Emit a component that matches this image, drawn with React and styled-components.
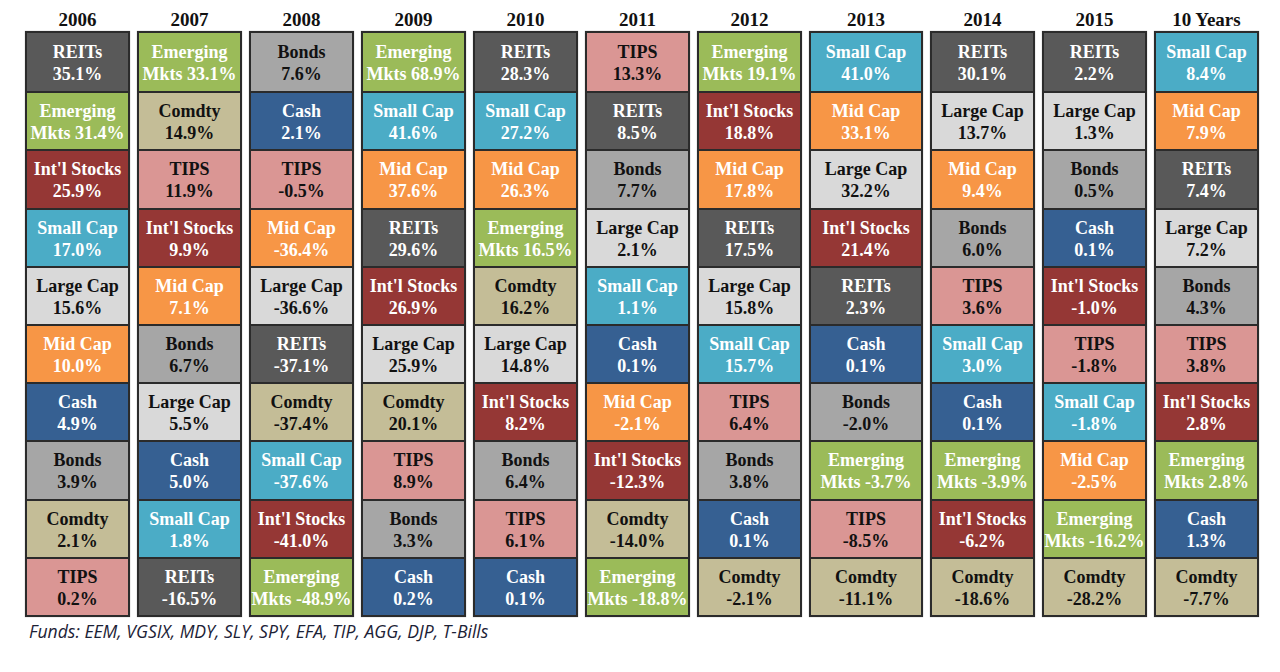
import React from "react";
import styled, { createGlobalStyle } from "styled-components";

const GlobalStyle = createGlobalStyle`
  html, body { margin: 0; padding: 0; background: #ffffff; }
  body { width: 1280px; height: 672px; overflow: hidden; }
`;

const ASSETS = {
  REITs: { bg: "#595959", fg: "#ffffff" },
  Emerging: { bg: "#9bbb59", fg: "#ffffff" },
  "Int'l Stocks": { bg: "#953735", fg: "#ffffff" },
  "Small Cap": { bg: "#4bacc6", fg: "#ffffff" },
  "Large Cap": { bg: "#d9d9d9", fg: "#111111" },
  "Mid Cap": { bg: "#f79646", fg: "#ffffff" },
  Cash: { bg: "#366092", fg: "#ffffff" },
  Bonds: { bg: "#a6a6a6", fg: "#111111" },
  Comdty: { bg: "#c4bd97", fg: "#111111" },
  TIPS: { bg: "#da9694", fg: "#111111" },
};

const DATA = [
  { year: "2006", rows: [["REITs", "35.1%"], ["Emerging", "31.4%"], ["Int'l Stocks", "25.9%"], ["Small Cap", "17.0%"], ["Large Cap", "15.6%"], ["Mid Cap", "10.0%"], ["Cash", "4.9%"], ["Bonds", "3.9%"], ["Comdty", "2.1%"], ["TIPS", "0.2%"]] },
  { year: "2007", rows: [["Emerging", "33.1%"], ["Comdty", "14.9%"], ["TIPS", "11.9%"], ["Int'l Stocks", "9.9%"], ["Mid Cap", "7.1%"], ["Bonds", "6.7%"], ["Large Cap", "5.5%"], ["Cash", "5.0%"], ["Small Cap", "1.8%"], ["REITs", "-16.5%"]] },
  { year: "2008", rows: [["Bonds", "7.6%"], ["Cash", "2.1%"], ["TIPS", "-0.5%"], ["Mid Cap", "-36.4%"], ["Large Cap", "-36.6%"], ["REITs", "-37.1%"], ["Comdty", "-37.4%"], ["Small Cap", "-37.6%"], ["Int'l Stocks", "-41.0%"], ["Emerging", "-48.9%"]] },
  { year: "2009", rows: [["Emerging", "68.9%"], ["Small Cap", "41.6%"], ["Mid Cap", "37.6%"], ["REITs", "29.6%"], ["Int'l Stocks", "26.9%"], ["Large Cap", "25.9%"], ["Comdty", "20.1%"], ["TIPS", "8.9%"], ["Bonds", "3.3%"], ["Cash", "0.2%"]] },
  { year: "2010", rows: [["REITs", "28.3%"], ["Small Cap", "27.2%"], ["Mid Cap", "26.3%"], ["Emerging", "16.5%"], ["Comdty", "16.2%"], ["Large Cap", "14.8%"], ["Int'l Stocks", "8.2%"], ["Bonds", "6.4%"], ["TIPS", "6.1%"], ["Cash", "0.1%"]] },
  { year: "2011", rows: [["TIPS", "13.3%"], ["REITs", "8.5%"], ["Bonds", "7.7%"], ["Large Cap", "2.1%"], ["Small Cap", "1.1%"], ["Cash", "0.1%"], ["Mid Cap", "-2.1%"], ["Int'l Stocks", "-12.3%"], ["Comdty", "-14.0%"], ["Emerging", "-18.8%"]] },
  { year: "2012", rows: [["Emerging", "19.1%"], ["Int'l Stocks", "18.8%"], ["Mid Cap", "17.8%"], ["REITs", "17.5%"], ["Large Cap", "15.8%"], ["Small Cap", "15.7%"], ["TIPS", "6.4%"], ["Bonds", "3.8%"], ["Cash", "0.1%"], ["Comdty", "-2.1%"]] },
  { year: "2013", rows: [["Small Cap", "41.0%"], ["Mid Cap", "33.1%"], ["Large Cap", "32.2%"], ["Int'l Stocks", "21.4%"], ["REITs", "2.3%"], ["Cash", "0.1%"], ["Bonds", "-2.0%"], ["Emerging", "-3.7%"], ["TIPS", "-8.5%"], ["Comdty", "-11.1%"]] },
  { year: "2014", rows: [["REITs", "30.1%"], ["Large Cap", "13.7%"], ["Mid Cap", "9.4%"], ["Bonds", "6.0%"], ["TIPS", "3.6%"], ["Small Cap", "3.0%"], ["Cash", "0.1%"], ["Emerging", "-3.9%"], ["Int'l Stocks", "-6.2%"], ["Comdty", "-18.6%"]] },
  { year: "2015", rows: [["REITs", "2.2%"], ["Large Cap", "1.3%"], ["Bonds", "0.5%"], ["Cash", "0.1%"], ["Int'l Stocks", "-1.0%"], ["TIPS", "-1.8%"], ["Small Cap", "-1.8%"], ["Mid Cap", "-2.5%"], ["Emerging", "-16.2%"], ["Comdty", "-28.2%"]] },
  { year: "10 Years", rows: [["Small Cap", "8.4%"], ["Mid Cap", "7.9%"], ["REITs", "7.4%"], ["Large Cap", "7.2%"], ["Bonds", "4.3%"], ["TIPS", "3.8%"], ["Int'l Stocks", "2.8%"], ["Emerging", "2.8%"], ["Cash", "1.3%"], ["Comdty", "-7.7%"]] },
];

const Page = styled.div`
  width: 1280px;
  height: 672px;
  box-sizing: border-box;
  padding: 0 0 0 25px;
  display: flex;
  flex-direction: column;
`;

const Chart = styled.div`
  display: grid;
  grid-template-columns: repeat(7, 105px) 114px repeat(3, 105px);
  column-gap: 7px;
`;

const YearColumn = styled.div`
  display: flex;
  flex-direction: column;
`;

const YearLabel = styled.div`
  height: 31px;
  box-sizing: border-box;
  padding-top: 10px;
  text-align: center;
  font-family: "Liberation Serif", "DejaVu Serif", serif;
  font-weight: 700;
  font-size: 19px;
  line-height: 20px;
  color: #111111;
`;

const Stack = styled.div`
  height: 586px;
  box-sizing: border-box;
  border: 2px solid #2b2b2b;
  display: grid;
  grid-template-rows: repeat(10, 1fr);
  box-shadow: 0 0 1px rgba(0, 0, 0, 0.4);
`;

const Cell = styled.div`
  background: ${(p) => p.$bg};
  color: ${(p) => p.$fg};
  border-top: ${(p) => (p.$first ? "none" : "2px solid #2b2b2b")};
  display: flex;
  flex-direction: column;
  align-items: center;
  justify-content: center;
  font-family: "Liberation Serif", "DejaVu Serif", serif;
  font-weight: 700;
  font-size: 18px;
  line-height: 22px;
  white-space: nowrap;
  padding-top: 2px;
`;

const Footnote = styled.div`
  margin-top: 2px;
  padding-left: 4px;
  font-family: "Open Sans", Lato, sans-serif;
  font-style: italic;
  font-size: 17.6px;
  color: #1c2236;
`;

function AssetCell({ name, value, first }) {
  const c = ASSETS[name];
  const isEm = name === "Emerging";
  return (
    <Cell $bg={c.bg} $fg={c.fg} $first={first}>
      <span>{name}</span>
      <span>{isEm ? `Mkts ${value}` : value}</span>
    </Cell>
  );
}

export default function App() {
  return (
    <>
      <GlobalStyle />
      <Page>
        <Chart>
          {DATA.map((col) => (
            <YearColumn key={col.year}>
              <YearLabel>{col.year}</YearLabel>
              <Stack>
                {col.rows.map(([n, v], i) => (
                  <AssetCell key={n} name={n} value={v} first={i === 0} />
                ))}
              </Stack>
            </YearColumn>
          ))}
        </Chart>
        <Footnote>Funds: EEM, VGSIX, MDY, SLY, SPY, EFA, TIP, AGG, DJP, T-Bills</Footnote>
      </Page>
    </>
  );
}
